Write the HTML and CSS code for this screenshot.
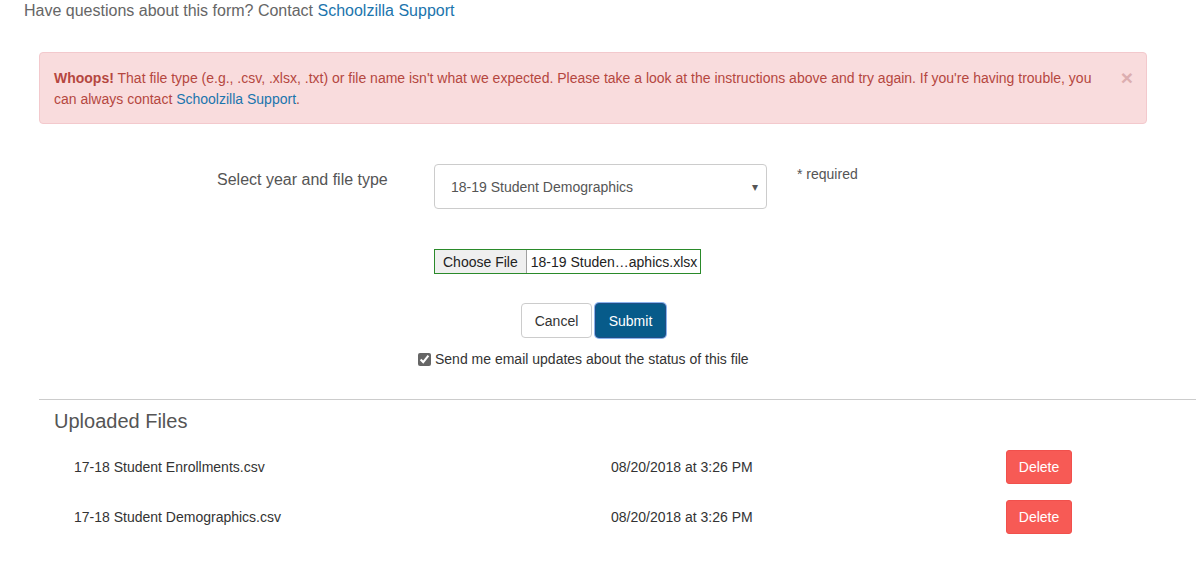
FILE: index.html
```html
<html>
<head>
<title>Upload a file</title>
<link rel="stylesheet" href="styles.css">
</head>
<body>

  <p class="help">Have questions about this form? Contact <a href="#">Schoolzilla Support</a></p>

  <div class="alert">
    <span class="close">&times;</span>
    <b>Whoops!</b> That file type (e.g., .csv, .xlsx, .txt) or file name isn't what we expected. Please take a look at the instructions above and try again. If you're having trouble, you can always contact <a href="#">Schoolzilla Support</a>.
  </div>

  <div class="form-row">
    <label class="form-label">Select year and file type</label>
    <div class="select">
      <span>18-19 Student Demographics</span>
      <span class="caret">&#9662;</span>
    </div>
    <span class="required">* required</span>
  </div>

  <div class="file-row">
    <div class="file-input">
      <span class="file-btn">Choose File</span>
      <span class="file-name">18-19 Studen&hellip;aphics.xlsx</span>
    </div>
  </div>

  <div class="actions">
    <button class="btn">Cancel</button>
    <button class="btn btn-primary">Submit</button>
  </div>

  <div class="check-row">
    <input type="checkbox" checked>
    <span>Send me email updates about the status of this file</span>
  </div>

  <hr>

  <h2>Uploaded Files</h2>
  <div class="files">
    <div class="file">
      <span class="name">17-18 Student Enrollments.csv</span>
      <span class="date">08/20/2018 at 3:26 PM</span>
      <button class="btn-delete">Delete</button>
    </div>
    <div class="file">
      <span class="name">17-18 Student Demographics.csv</span>
      <span class="date">08/20/2018 at 3:26 PM</span>
      <button class="btn-delete">Delete</button>
    </div>
  </div>

</body>
</html>
```

FILE: styles.css
```css
body {
  margin: 0;
  font-family: "Liberation Sans", Arial, sans-serif;
  font-size: 14px;
  color: #333;
  background: white;
}
a {
  color: #1b75ad;
  text-decoration: none;
}
.help {
  margin: 0;
  padding-left: 24px;
  font-size: 16px;
  line-height: 22px;
  color: #666;
}
.alert {
  margin: 30px 49px 0 39px;
  padding: 15px 35px 13px 14px;
  background-color: #f9dcdd;
  border: 1px solid #f3c9cd;
  border-radius: 4px;
  color: #b5473f;
  line-height: 21px;
}
.alert .close {
  float: right;
  margin-right: -22px;
  font-size: 21px;
  font-weight: bold;
  color: #dcaeb0;
  line-height: 19px;
}

.form-row {
  display: flex;
  align-items: flex-start;
  margin-top: 40px;
}
.form-label {
  width: 217px;
  margin-left: 217px;
  padding-top: 5px;
  font-size: 16px;
  line-height: 22px;
  color: #555;
}
.select {
  display: flex;
  justify-content: space-between;
  align-items: center;
  box-sizing: border-box;
  width: 333px;
  height: 45px;
  padding: 0 8px 0 16px;
  border: 1px solid #ccc;
  border-radius: 4px;
  color: #555;
}
.select .caret {
  font-size: 12px;
  color: #555;
}
.required {
  margin-left: 30px;
  margin-top: 2px;
  color: #555;
}

.file-row {
  margin: 40px 0 0 434px;
}
.file-input {
  display: inline-flex;
  align-items: stretch;
  border: 1px solid #2a8a2a;
  height: 23px;
  font-size: 14px;
}
.file-btn {
  display: flex;
  align-items: center;
  padding: 0 8px;
  background: #efefef;
  border-right: 1px solid #a0a0a0;
  color: #222;
}
.file-name {
  display: flex;
  align-items: center;
  padding: 0 3px 0 4px;
  color: #222;
}

.actions {
  display: flex;
  gap: 3px;
  margin: 29px 0 0 521px;
}
.btn {
  box-sizing: border-box;
  width: 71px;
  height: 35px;
  font-family: "Liberation Sans", Arial, sans-serif;
  font-size: 14px;
  color: #333;
  background: white;
  border: 1px solid #ccc;
  border-radius: 4px;
}
.btn-primary {
  color: white;
  background: #075b8a;
  border: 1px solid #1f4f86;
  box-shadow: 0 0 0 1px #8ab4ee;
}

.check-row {
  display: flex;
  align-items: center;
  gap: 4px;
  margin: 11px 0 0 418px;
  line-height: 20px;
}
.check-row input {
  margin: 0;
  width: 13px;
  height: 13px;
  accent-color: #666;
}

hr {
  margin: 30px 0 0 39px;
  border: 0;
  border-top: 1px solid #ccc;
}
h2 {
  margin: 9px 0 0 54px;
  font-size: 20px;
  font-weight: normal;
  line-height: 24px;
  color: #555;
}
.files {
  margin-top: 9px;
}
.file {
  display: flex;
  align-items: center;
  height: 50px;
}
.file .name {
  width: 537px;
  margin-left: 74px;
}
.file .date {
  width: 395px;
}
.btn-delete {
  width: 66px;
  height: 34px;
  font-family: "Liberation Sans", Arial, sans-serif;
  font-size: 14px;
  color: white;
  background: #f75a55;
  border: 1px solid #f1504c;
  border-radius: 3px;
}
```
